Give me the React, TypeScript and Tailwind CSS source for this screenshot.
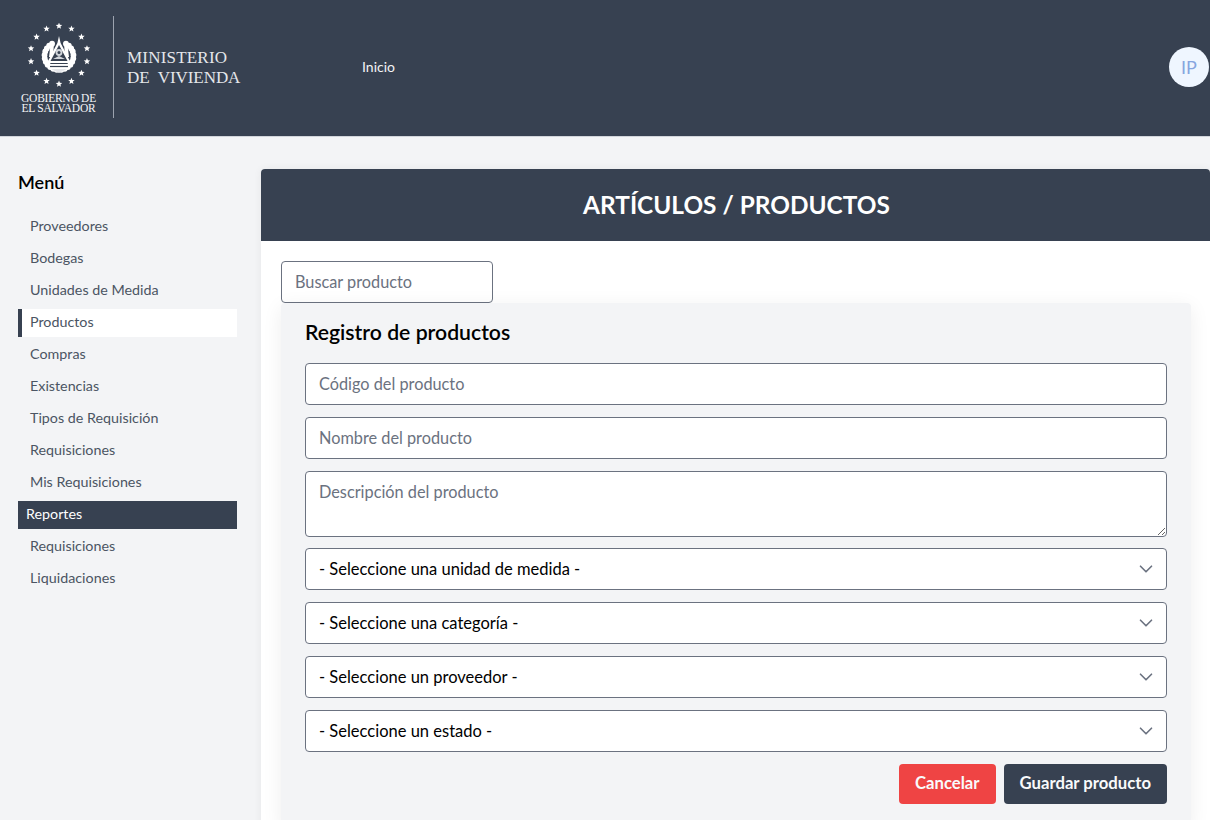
import { ChevronDown } from "lucide-react";

const menu = ["Proveedores", "Bodegas", "Unidades de Medida", "Productos", "Compras", "Existencias", "Tipos de Requisición", "Requisiciones", "Mis Requisiciones"];
const reportes = ["Requisiciones", "Liquidaciones"];
const selects = ["- Seleccione una unidad de medida -", "- Seleccione una categoría -", "- Seleccione un proveedor -", "- Seleccione un estado -"];

const stars = Array.from({ length: 14 }, (_, i) => {
  const a = (i / 14) * Math.PI * 2;
  return { x: 32 + Math.sin(a) * 28.7, y: 32 - Math.cos(a) * 29 };
});

// laurel leaves round the coat of arms
const leaves = Array.from({ length: 11 }, (_, i) => {
  const a = ((i + 1.2) / 12) * Math.PI * 0.95 + 0.2;
  return { dx: Math.sin(a) * 14.5, y: 33 - Math.cos(a) * 14 };
});

function Star({ x, y }: { x: number; y: number }) {
  const pts = Array.from({ length: 10 }, (_, i) => {
    const r = i % 2 === 0 ? 3.4 : 1.5;
    const a = (i / 10) * Math.PI * 2;
    return `${x + Math.sin(a) * r},${y - Math.cos(a) * r}`;
  }).join(" ");
  return <polygon points={pts} fill="#fff" />;
}

function Crest() {
  return (
    <svg width="64" height="64" viewBox="0 0 64 64">
      {stars.map((s, i) => (
        <Star key={i} x={s.x} y={s.y} />
      ))}
      {leaves.map((l, i) => (
        <g key={i} fill="#fff">
          <circle cx={32 - l.dx} cy={l.y} r="2.9" />
          <circle cx={32 + l.dx} cy={l.y} r="2.9" />
        </g>
      ))}
      <path d="M24 18 L27 20 L26 34 L22 34 Z M40 18 L37 20 L38 34 L42 34 Z" fill="#fff" />
      <path d="M32 13 L33.6 20 L44 40 H20 L30.4 20 Z" fill="#fff" />
      <path d="M32 22 L40.5 38 H23.5 Z" fill="#374151" />
      <circle cx="32" cy="29.5" r="3.4" fill="#d1d5db" />
      <circle cx="32" cy="29.5" r="1.5" fill="#374151" />
      <path d="M26 36 L32 33 L38 36 Z" fill="#d1d5db" />
      <path d="M18 41 H46 L42 46 H22 Z" fill="#fff" />
      <path d="M23 43.5 H41" stroke="#374151" strokeWidth="1.2" />
      <path d="M24 46 L32 50 L40 46 Z" fill="#e5e7eb" />
    </svg>
  );
}

function Select({ label }: { label: string }) {
  return (
    <div className="relative">
      <select className="w-full h-[42px] appearance-none rounded border border-[#6b7280] bg-white pl-[13px] pr-8 text-[16.5px] text-black">
        <option>{label}</option>
      </select>
      <ChevronDown className="absolute right-[10px] top-[10px] w-[22px] h-[22px] text-[#6b7280] pointer-events-none" strokeWidth={1.8} />
    </div>
  );
}

export default function App() {
  return (
    <div className="h-[820px] overflow-hidden bg-[#f3f4f6] font-['Lato',sans-serif]">
      <header className="h-[137px] bg-[#374151] border-b border-[#d1d5db] flex items-center">
        <div className="w-[113px] flex flex-col items-center pl-[4px]">
          <Crest />
          <div className="font-['Liberation_Serif',serif] text-[#f3f4f6] text-[11.5px] leading-[10.5px] text-center tracking-[-0.25px] mt-[6px]">
            GOBIERNO DE
            <br />
            EL SALVADOR
          </div>
        </div>
        <div className="w-px h-[102px] bg-[#9ca3af] -mt-[2px]"></div>
        <div className="ml-[13px] font-['Liberation_Serif',serif] text-[#e5e7eb] text-[17px] leading-[20px] whitespace-pre w-[235px]">
          <div className="tracking-[0.2px]">MINISTERIO</div>
          <div className="tracking-[-0.05px]">{"DE  VIVIENDA"}</div>
        </div>
        <a className="text-sm text-[#f3f4f6] -mt-[2px]">Inicio</a>
        <div className="ml-auto mr-px -mt-[2px] w-10 h-10 rounded-full bg-[#eff6ff] text-[#86a5e0] flex items-center justify-center text-[18px]">IP</div>
      </header>
      <div className="flex">
        <aside className="w-[261px] shrink-0 pl-[18px] pr-[24px] pt-[35px]">
          <h2 className="text-[18px] leading-5 font-semibold text-black mb-[21px]">Menú</h2>
          <ul className="flex flex-col gap-1 text-[14.3px] text-[#4b5563]">
            {menu.map((m) =>
              m === "Productos" ? (
                <li key={m} className="h-7 pb-[2px] flex items-center bg-white border-l-4 border-[#374151] pl-2">{m}</li>
              ) : (
                <li key={m} className="h-7 pb-[2px] flex items-center pl-3">{m}</li>
              )
            )}
            <li className="h-7 pb-[2px] flex items-center bg-[#374151] text-white pl-2">Reportes</li>
            {reportes.map((m) => (
              <li key={m} className="h-7 pb-[2px] flex items-center pl-3">{m}</li>
            ))}
          </ul>
        </aside>
        <main className="flex-1 mt-[32px] bg-white rounded-t shadow-[0_0_8px_rgba(0,0,0,0.06)] h-[700px]">
          <h1 className="h-[72px] pl-[2px] bg-[#374151] rounded-t flex items-center justify-center text-white text-[24.4px] font-bold">ARTÍCULOS / PRODUCTOS</h1>
          <div className="pl-[20px] pr-[19px] pt-[20px]">
            <input placeholder="Buscar producto" className="block w-[212px] h-[42px] rounded border border-[#6b7280] bg-white px-[13px] pb-[2px] text-[16.3px] placeholder:text-[#6b7280]" />
            <section className="bg-[#f3f4f6] rounded shadow-[0_4px_20px_rgba(0,0,0,0.07)] pl-[24px] pr-[24px] pt-[17px] pb-6">
              <h2 className="text-[21.2px] leading-6 font-semibold text-black mb-[19px]">Registro de productos</h2>
              <div className="flex flex-col gap-3">
                <input placeholder="Código del producto" className="h-[42px] rounded border border-[#6b7280] bg-white px-[13px] pb-[2px] text-[16.3px] placeholder:text-[#6b7280]" />
                <input placeholder="Nombre del producto" className="h-[42px] rounded border border-[#6b7280] bg-white px-[13px] pb-[2px] text-[16.3px] placeholder:text-[#6b7280]" />
                <textarea placeholder="Descripción del producto" className="block h-[66px] -mb-px rounded border border-[#6b7280] bg-white px-[13px] py-2 text-[16.3px] placeholder:text-[#6b7280]"></textarea>
                {selects.map((s) => (
                  <Select key={s} label={s} />
                ))}
                <div className="flex justify-end gap-2">
                  <button className="h-10 px-4 rounded bg-[#ef4444] text-[#f9fafb] font-bold text-[16.7px]">Cancelar</button>
                  <button className="h-10 px-4 rounded bg-[#374151] text-[#f9fafb] font-bold text-[16.7px]">Guardar producto</button>
                </div>
              </div>
            </section>
          </div>
        </main>
      </div>
    </div>
  );
}
